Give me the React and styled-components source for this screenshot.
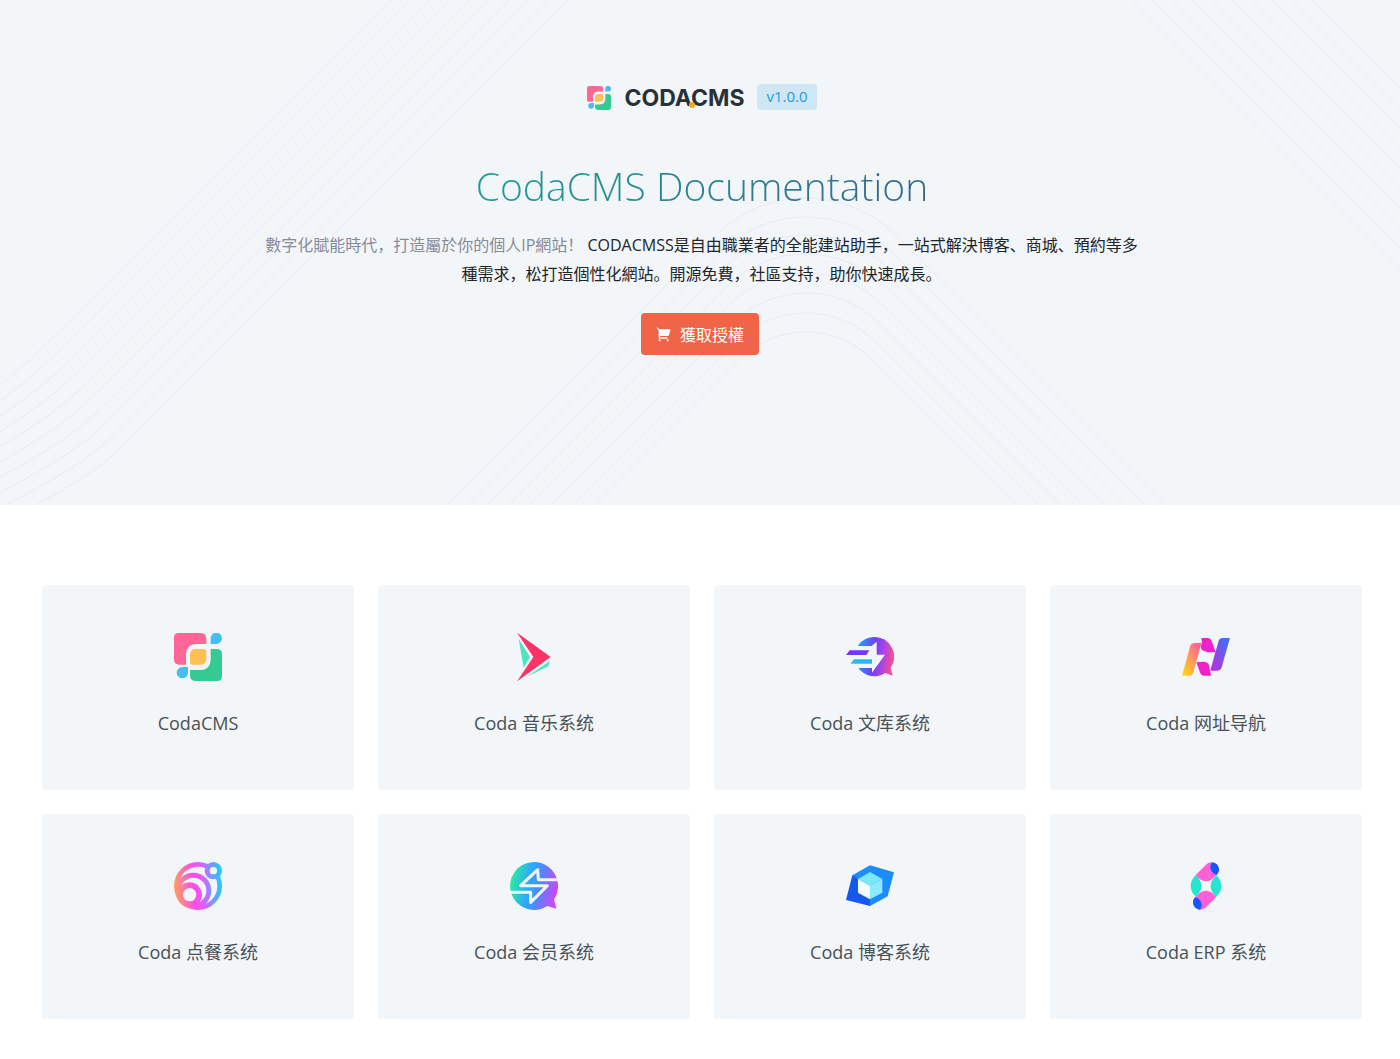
import React from 'react';
import styled, { createGlobalStyle } from 'styled-components';
import { RiShoppingCart2Fill } from 'react-icons/ri';

const GlobalStyle = createGlobalStyle`
  * {
    box-sizing: border-box;
  }
  body {
    margin: 0;
    background: #fff;
    color: #212529;
    font-family: 'Open Sans', 'Noto Sans CJK SC', sans-serif;
    font-size: 16px;
  }
`;

const Hero = styled.header`
  position: relative;
  background: #f2f6f9;
  padding: 84px 40px 150px;
  overflow: hidden;
`;

const Pattern = styled.svg`
  position: absolute;
  top: 0;
  left: 0;
  width: 100%;
  height: 100%;
  fill: none;
  stroke: #e8ebf7;
`;

const HeroContent = styled.div`
  position: relative;
  display: flex;
  flex-direction: column;
  align-items: center;
  text-align: center;
`;

const Brand = styled.div`
  display: flex;
  align-items: flex-end;
  gap: 13px;
  padding-left: 4px;
`;

const BrandLink = styled.a`
  display: flex;
  align-items: center;
  gap: 13px;
  color: #263238;
  text-decoration: none;
`;

const Wordmark = styled.span`
  position: relative;
  font-family: Inter, sans-serif;
  font-size: 23px;
  font-weight: 700;
  line-height: 24px;
`;

const Dot = styled.span`
  position: absolute;
  left: 65px;
  bottom: 2px;
  width: 6px;
  height: 6px;
  border-radius: 50%;
  background: #faa61a;
`;

const Version = styled.span`
  padding: 0 9px 2px;
  border-radius: 4px;
  background: #cfe6f4;
  color: #299cdb;
  font-size: 15px;
  line-height: 24px;
`;

const Title = styled.h1`
  margin: 49px 0 0;
  padding-left: 4px;
  background: linear-gradient(to right, #1f9e94, #38678f);
  background-clip: text;
  color: transparent;
  font-size: 39px;
  font-weight: 300;
  line-height: 54px;
`;

const Lead = styled.p`
  max-width: 884px;
  margin: 18px 0 24px;
  padding-left: 3px;
  line-height: 29px;
`;

const Muted = styled.span`
  color: #878a99;
`;

const BuyButton = styled.button`
  display: flex;
  align-items: center;
  gap: 8px;
  height: 42px;
  padding: 0 15px;
  border: 0;
  border-radius: 4px;
  background: #f06548;
  color: #fff;
  font: inherit;
  cursor: pointer;
`;

const Products = styled.main`
  display: grid;
  grid-template-columns: repeat(4, 1fr);
  gap: 24px;
  padding: 80px 38px 40px 42px;
`;

const Card = styled.a`
  display: flex;
  flex-direction: column;
  align-items: center;
  gap: 28px;
  padding: 48px 16px 53px;
  border-radius: 4px;
  background: #f2f6f9;
  color: #495057;
  font-size: 18px;
  line-height: 28px;
  text-decoration: none;
`;

const Icon = styled.svg`
  width: ${(props) => props.$size || 48}px;
  height: ${(props) => props.$size || 48}px;
`;

const BG = '#f2f6f9';

const CmsIcon = ({ size }) => (
  <Icon $size={size} viewBox="48 39 144 144">
    <path fill="#ff6696" d="M62 39H127Q145 39 145 57V72H118Q84 72 84 106V134H64Q48 134 48 118V53Q48 39 62 39Z" />
    <path fill="#34cb93" d="M178 183H114Q96 183 96 165V150H124Q158 150 158 116V87H176Q192 87 192 103V169Q192 183 178 183Z" />
    <path fill="#fcc152" d="M113 87H138Q145 87 145 94V116Q145 134 127 134H103Q96 134 96 127V104Q96 87 113 87Z" />
    <path fill="#47bdf7" d="M158 72V56A17 17 0 1 1 175 72ZM90 141V157A17 17 0 1 1 73 141Z" />
  </Icon>
);

const MusicIcon = () => (
  <Icon viewBox="48 39 144 144">
    <path fill="#ff3366" d="M69 38L170 111L69 184L118 111Z" />
    <path fill="#50e3c2" d="M74 57L108 111L89 144ZM99 170L168 122L163 139Z" />
  </Icon>
);

const LibraryIcon = () => (
  <Icon viewBox="48 39 144 144">
    <defs>
      <linearGradient id="library" gradientUnits="userSpaceOnUse" x1="80" x2="192" y1="100" y2="115">
        <stop offset="0" stopColor="#16a8ff" />
        <stop offset="0.45" stopColor="#7040fa" />
        <stop offset="0.65" stopColor="#9b43ee" />
        <stop offset="1" stopColor="#ff4f8b" />
      </linearGradient>
    </defs>
    <path fill="url(#library)" d="M133 51A59 59 0 0 1 182 143L188 167L166 159A59 59 0 1 1 133 51Z" />
    <path fill={BG} d="M48 78H124L140 65V104H165L126 158V144H48Z" />
    <path fill="#7438f5" d="M59 91H118L109 105H48Z" />
    <path fill="#28b8f8" d="M72 118H126V131H62Z" />
  </Icon>
);

const NavIcon = () => (
  <Icon viewBox="48 39 144 144">
    <defs>
      <linearGradient id="navLeft" x1="0" x2="1" y1="1" y2="0">
        <stop offset="0" stopColor="#ffe000" />
        <stop offset="0.5" stopColor="#ff9760" />
        <stop offset="1" stopColor="#fb55a8" />
      </linearGradient>
      <linearGradient id="navRight" x1="0" x2="1" y1="1" y2="0">
        <stop offset="0" stopColor="#c22ad8" />
        <stop offset="1" stopColor="#3774ff" />
      </linearGradient>
    </defs>
    <path fill="url(#navLeft)" d="M86 69H106L99 96L90 128L82 158Q79 167 70 167H48L72 80Q75 69 86 69Z" />
    <path fill="#f31fc8" d="M106 54H125Q133 54 136 61L149 97H125L112 92Q104 88 104 80L108 67ZM91 127L113 125Q125 125 129 136L135 167H112Q106 167 103 160Z" />
    <path fill="url(#navRight)" d="M168 54H192L167 142Q164 152 154 152H133L146 104L158 62Q160 54 168 54Z" />
  </Icon>
);

const FoodIcon = () => (
  <Icon viewBox="48 36 144 144">
    <defs>
      <linearGradient id="food" gradientUnits="userSpaceOnUse" x1="48" x2="192" y1="108" y2="98">
        <stop offset="0" stopColor="#ff9f5e" />
        <stop offset="0.4" stopColor="#fb4fe8" />
        <stop offset="0.55" stopColor="#ee55ff" />
        <stop offset="1" stopColor="#18cfff" />
      </linearGradient>
    </defs>
    <circle cx="120" cy="108" r="72" fill="url(#food)" />
    <circle cx="120" cy="108" r="58" fill={BG} />
    <circle cx="106" cy="122" r="54" fill="url(#food)" />
    <circle cx="106" cy="122" r="39" fill={BG} />
    <circle cx="95" cy="134" r="37" fill="url(#food)" />
    <circle cx="95" cy="134" r="20" fill={BG} />
    <circle cx="166" cy="62" r="26" fill="url(#food)" />
    <circle cx="166" cy="62" r="11" fill={BG} />
  </Icon>
);

const MemberIcon = () => (
  <Icon viewBox="48 36 144 144">
    <defs>
      <linearGradient id="member" x1="0" x2="1" y1="0.4" y2="0.6">
        <stop offset="0" stopColor="#2ceca0" />
        <stop offset="0.4" stopColor="#2ea6ff" />
        <stop offset="0.6" stopColor="#5089ff" />
        <stop offset="1" stopColor="#d83fff" />
      </linearGradient>
    </defs>
    <path fill="url(#member)" d="M120 36A72 72 0 0 1 180 148L187 176L160 168A72 72 0 1 1 120 36Z" />
    <path fill="none" stroke={BG} strokeWidth="9" strokeLinejoin="round" d="M196 89H133L131 59L80 107H160L110 157V127H44" />
  </Icon>
);

const BlogIcon = () => (
  <Icon viewBox="48 36 144 144">
    <path fill="#1c8bfb" d="M120 46L192 67L173 139L120 168L84 128L67 76Z" />
    <path fill="#1658ee" d="M67 76L84 87V128L120 148V168L48 150Z" />
    <path fill="#7ce6fd" d="M120 66L157 87L120 107L84 87Z" />
    <path fill="#8cebff" d="M157 87V128L120 148V107Z" />
    <path fill="#f0fcff" d="M84 87L120 107V148L84 128Z" />
  </Icon>
);

const ErpCap = () => (
  <>
    <path fill="#ff5fd7" d="M89 75L120 44Q129 35 140 37Q158 41 159 60Q159 67 151 76Q136 94 120 94Q102 93 89 75Z" />
    <path fill="#1158ff" d="M139 37Q158 41 159 60Q159 67 152 75Q133 67 133 51Q133 42 139 37Z" />
    <path fill="#28e5cf" d="M89 75Q74 91 74 107Q74 125 89 140Q106 125 106 107Q106 91 89 75Z" />
  </>
);

const ErpIcon = () => (
  <Icon viewBox="48 36 144 144">
    <ErpCap />
    <g transform="rotate(180 120 108)">
      <ErpCap />
    </g>
  </Icon>
);

const products = [
  { name: 'CodaCMS', icon: CmsIcon },
  { name: 'Coda 音乐系统', icon: MusicIcon },
  { name: 'Coda 文库系统', icon: LibraryIcon },
  { name: 'Coda 网址导航', icon: NavIcon },
  { name: 'Coda 点餐系统', icon: FoodIcon },
  { name: 'Coda 会员系统', icon: MemberIcon },
  { name: 'Coda 博客系统', icon: BlogIcon },
  { name: 'Coda ERP 系统', icon: ErpIcon },
];

const range = (n) => Array.from({ length: n }, (_, i) => i);

const arches = [198, 217, 235, 254, 273, 293, 313, 332];

const archPath = (top, i) => {
  const half = 90 - i * 3.4;
  const y = top + half * 0.414;
  const r = half * 1.414;
  const foot = half + 505 - y;
  return `M${806 - foot} 505L${806 - half} ${y}A${r} ${r} 0 0 1 ${806 + half} ${y}L${806 + foot} 505`;
};

const bendPath = (i) => {
  const top = 390.6 + i * 19.75;
  const x = 56 + i * 6.9;
  const y = top - x;
  return `M${top} 0L${x} ${y}Q${x - 26 - i * 0.5} ${y + 26 + i * 0.5} 0 ${386 + i * 15.2}`;
};

const HeroPattern = () => (
  <Pattern viewBox="0 0 1400 505" preserveAspectRatio="xMidYMid slice" aria-hidden="true">
    {range(10).map((i) => (
      <path key={`l${i}`} d={bendPath(i)} />
    ))}
    {arches.map((top, i) => (
      <path key={`c${top}`} d={archPath(top, i)} />
    ))}
    {range(10).map((i) => (
      <path key={`r${i}`} d={`M${1131.7 + i * 20} 0l400 400`} />
    ))}
  </Pattern>
);

const App = () => (
  <>
    <GlobalStyle />
    <Hero>
      <HeroPattern />
      <HeroContent>
        <Brand>
          <BrandLink href="#home">
            <CmsIcon size={24} />
            <Wordmark>
              CODACMS
              <Dot />
            </Wordmark>
          </BrandLink>
          <Version>v1.0.0</Version>
        </Brand>
        <Title>CodaCMS Documentation</Title>
        <Lead>
          <Muted>數字化賦能時代，打造屬於你的個人IP網站！</Muted>
          {' '}
          CODACMSS是自由職業者的全能建站助手，一站式解決博客、商城、預約等多種需求，松打造個性化網站。開源免費，社區支持，助你快速成長。
        </Lead>
        <BuyButton type="button">
          <RiShoppingCart2Fill size={16} />
          獲取授權
        </BuyButton>
      </HeroContent>
    </Hero>
    <Products>
      {products.map(({ name, icon: ProductIcon }) => (
        <Card key={name} href="#docs">
          <ProductIcon />
          {name}
        </Card>
      ))}
    </Products>
  </>
);

export default App;
